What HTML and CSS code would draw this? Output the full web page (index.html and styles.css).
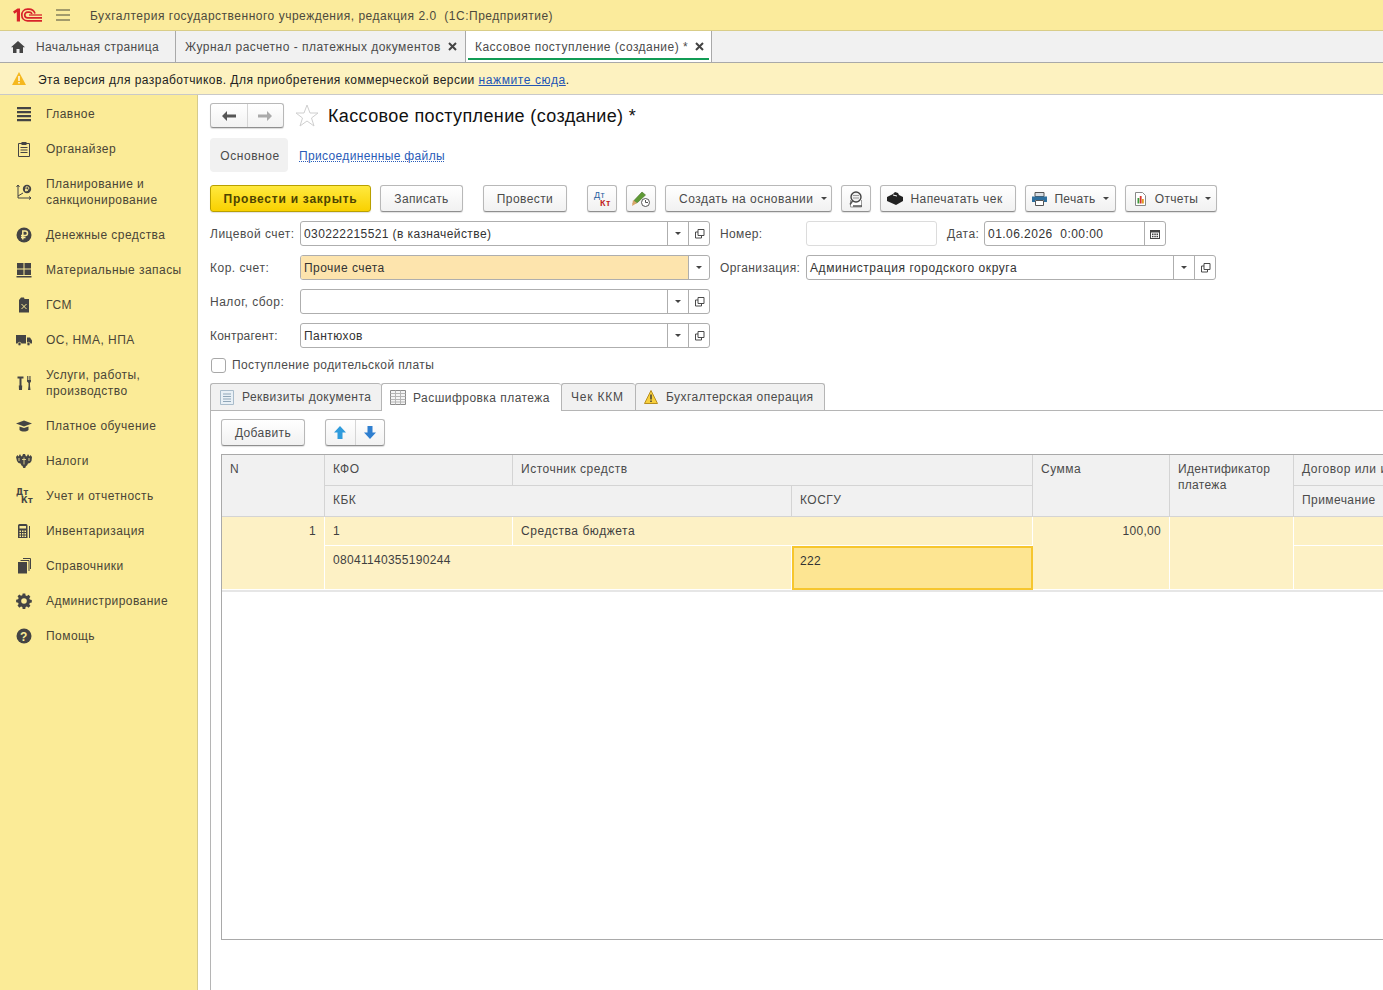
FILE: index.html
```html
<!DOCTYPE html>
<html lang="ru">
<head>
    <meta charset="UTF-8">
    <meta name="viewport" content="width=device-width, initial-scale=1.0">
    <title>Кассовое поступление (создание)</title>
    <link rel="stylesheet" href="styles.css">
</head>
<body>
    <svg class="defs">
        <symbol id="open" viewBox="0 0 11 11"><path d="M4 1.500h6v6H4zM4 4H1.500v6h6V7.500" fill="none" stroke="#4a4a4a"/></symbol>
        <symbol id="cross" viewBox="0 0 9 9"><path d="M1 1l7 7M8 1L1 8" fill="none" stroke="#444" stroke-width="2"/></symbol>
    </svg>

    <header class="titlebar">
        <svg class="logo" width="29" height="14" viewBox="0 0 29 14"><path d="M0 3.500L4.500 .5h2.500v13H3.800V4L1.500 5.800z" fill="#d8232a"/><path d="M29 12.800H14.500C10.800 12.800 8.800 10 8.800 7s2-5.800 5.700-5.800h1.500c3 0 5 1.600 6 4.300M29 9.800H14.700c-1.900 0-3-1.300-3-2.800s1.100-2.800 3-2.800h1.300c1.500 0 2.500.6 3 1.800" fill="none" stroke="#d8232a" stroke-width="1.700"/><path d="M29 7H16" stroke="#d8232a" stroke-width="1.300"/></svg>
        <svg class="burger" width="14" height="12" viewBox="0 0 14 12"><path d="M0 1h14M0 6h14M0 11h14" stroke="#4a4a3a" stroke-width="1"/></svg>
        <span class="app-name">Бухгалтерия государственного учреждения, редакция 2.0&nbsp; (1С:Предприятие)</span>
    </header>

    <nav class="tabbar">
        <div class="tabbar-item home">
            <svg width="14" height="12" viewBox="0 0 14 12"><path d="M7 0l7 6.200h-2V12H8.500V8h-3v4H2V6.200H0z" fill="#444"/></svg>
            <span>Начальная страница</span>
        </div>
        <div class="tabbar-item journal">
            <span>Журнал расчетно - платежных документов</span><svg class="close" width="9" height="9"><use href="#cross"/></svg>
        </div>
        <div class="tabbar-item current">
            <span>Кассовое поступление (создание) *</span><svg class="close" width="9" height="9"><use href="#cross"/></svg>
        </div>
    </nav>

    <div class="notice">
        <svg width="14" height="13" viewBox="0 0 14 13"><path d="M7 0l7 13H0z" fill="#f5b81f"/><path d="M6.300 4h1.400v5H6.300zM6.300 10h1.400v1.500H6.300z" fill="#fff"/></svg>
        <span>Эта версия для разработчиков. Для приобретения коммерческой версии <a href="#">нажмите сюда</a>.</span>
    </div>

    <div class="layout">
        <aside class="sidebar">
            <div class="side-item">
                <svg viewBox="0 0 16 16"><path d="M1 1h14v2.200H1zM1 5h14v2.200H1zM1 9h14v2.200H1zM1 13h14v2.200H1z"/></svg>
                <span>Главное</span>
            </div>
            <div class="side-item">
                <svg viewBox="0 0 16 16"><path d="M2.500 2.500h11v13h-11z" fill="none" stroke="#444"/><path d="M5.500 1h5v3h-5zM4.500 6h7v1h-7zM4.500 8.500h7v1h-7zM4.500 11h7v1h-7z"/></svg>
                <span>Органайзер</span>
            </div>
            <div class="side-item tall">
                <svg viewBox="0 0 16 16"><path d="M2 1v13M0.500 3L2 1l1.500 2M2 14h13M13 12.500l2 1.500-2 1.500M2 12l5-3" fill="none" stroke="#444"/><circle cx="11" cy="5" r="4.200"/><path d="M10 7.500V2.800h1.500a1.300 1.300 0 010 2.700H9M9 6.500h3" fill="none" stroke="#fbeb97" stroke-width=".9"/></svg>
                <span>Планирование и санкционирование</span>
            </div>
            <div class="side-item">
                <svg viewBox="0 0 16 16"><circle cx="8" cy="8" r="7.500"/><path d="M6.800 12.500V4h2.400a2.300 2.300 0 010 4.600H5M5 10.500h4.500" fill="none" stroke="#fbeb97" stroke-width="1.500"/></svg>
                <span>Денежные средства</span>
            </div>
            <div class="side-item">
                <svg viewBox="0 0 16 16"><path d="M1 1h6.500v5.500H1zM8.500 1H15v5.500H8.500zM1 7.500h6.500V13H1zM8.500 7.500H15V13H8.500zM0.500 14h15v1.500H.5z"/></svg>
                <span>Материальные запасы</span>
            </div>
            <div class="side-item">
                <svg viewBox="0 0 16 16"><path d="M3 3l2-2.500h3l.5 1.500L13 2v13.500H3z"/><path d="M5.500 7l5 5M10.500 7l-5 5" stroke="#fbeb97" stroke-width="1"/></svg>
                <span>ГСМ</span>
            </div>
            <div class="side-item">
                <svg viewBox="0 0 16 16"><path d="M0 3h10v8.500H0zM11 5.500h3l2 3v3h-5z"/><circle cx="3.500" cy="12" r="1.700" stroke="#fbeb97" stroke-width=".7"/><circle cx="12.500" cy="12" r="1.700" stroke="#fbeb97" stroke-width=".7"/></svg>
                <span>ОС, НМА, НПА</span>
            </div>
            <div class="side-item tall">
                <svg viewBox="0 0 16 16"><path d="M1.500 1.500h6V3.500H5.500v7h.700l-.2 4.500H3l-.2-4.500h.700v-7h-2zM11 1h.8v4h.9V1h.9v4h.9V1H15v5.500l-1 1.500v3l.5 4h-2.500l.5-4V8l-1.500-1.500z"/></svg>
                <span>Услуги, работы, производство</span>
            </div>
            <div class="side-item">
                <svg viewBox="0 0 16 16"><path d="M0 5.500L8 2.500l8 3-8 3zM3.500 8.500L8 10l4.500-1.500V12c-1 1-3 1.500-4.500 1.500S4.500 13 3.500 12z"/></svg>
                <span>Платное обучение</span>
            </div>
            <div class="side-item">
                <svg viewBox="0 0 16 16"><path d="M0 4l1.500-2 1 1.500L4 1l1 2 1 .5L7 1h2l1 2.500 1-.5 1-2 1.500 2.500 1-1.500L16 4l-.5 4-1.500 2-2 .5-1 2-1 .5-.8 2H7.300l-.8-2-1-.5-1-2-2-.5L1 8z"/><path d="M8 4.500v7M6 6.500h4M3 5v3M13 5v3" stroke="#fbeb97" stroke-width=".8"/></svg>
                <span>Налоги</span>
            </div>
            <div class="side-item">
                <svg viewBox="0 0 16 16"><text x="0" y="7" class="dt-glyph">Дт</text><text x="5" y="15" class="dt-glyph">Кт</text></svg>
                <span>Учет и отчетность</span>
            </div>
            <div class="side-item">
                <svg viewBox="0 0 16 16"><path d="M2 2.500A1.500 1.500 0 013.500 1H10a1.500 1.500 0 011.500 1.500V15H2zM13 3h1v12h-1z"/><path d="M3.500 3h6.500v2.500H3.500zM3.500 7.500h1.500v1.500H3.500zM6 7.500h1.500v1.500H6zM8.500 7.500H10v1.500H8.500zM3.500 10h1.500v1.500H3.500zM6 10h1.500v1.500H6zM8.500 10H10v1.500H8.500zM3.500 12.500h1.500V14H3.500zM6 12.500h1.500V14H6zM8.500 12.500H10V14H8.500z" fill="#fbeb97"/></svg>
                <span>Инвентаризация</span>
            </div>
            <div class="side-item">
                <svg viewBox="0 0 16 16"><path d="M2 4h9v11.500H2z"/><path d="M4.500 2.500h8.500V13M7 .5h7.500V11" fill="none" stroke="#444"/></svg>
                <span>Справочники</span>
            </div>
            <div class="side-item">
                <svg viewBox="0 0 16 16"><path d="M6.500 0h3l.4 2.200 1.500.6 1.900-1.300 2.100 2.100-1.300 1.900.6 1.500 2.300.4v3l-2.300.4-.6 1.500 1.300 1.900-2.100 2.100-1.900-1.300-1.500.6-.4 2.300h-3l-.4-2.300-1.500-.6-1.900 1.300L.6 13.900l1.300-1.900-.6-1.500L-1 10.100v-3l2.300-.4.600-1.500L.6 3.300l2.100-2.100 1.900 1.300 1.500-.6z" transform="translate(1 .5) scale(.87)"/><circle cx="8" cy="8" r="2.800" fill="#fbeb97"/></svg>
                <span>Администрирование</span>
            </div>
            <div class="side-item">
                <svg viewBox="0 0 16 16"><circle cx="8" cy="8" r="7.500"/><text x="8" y="12.500" class="help-glyph">?</text></svg>
                <span>Помощь</span>
            </div>
        </aside>

        <main class="content">
            <div class="doc-head">
                <div class="btn-pair nav-pair">
                    <span class="pair-part">
                        <svg width="14" height="10" viewBox="0 0 14 10"><path d="M0 5l5-5v3.500h9v3H5V10z" fill="#555"/></svg>
                    </span>
                    <span class="pair-part">
                        <svg width="14" height="10" viewBox="0 0 14 10"><path d="M14 5L9 0v3.500H0v3h9V10z" fill="#aaa"/></svg>
                    </span>
                </div>
                <svg class="star" width="24" height="23" viewBox="0 0 24 23"><path d="M12 1l3 8h8l-6.500 5 2.500 8-7-5-7 5 2.500-8L1 9h8z" fill="#fff" stroke="#cfcfcf"/></svg>
                <h1>Кассовое поступление (создание) *</h1>
            </div>

            <div class="doc-sections">
                <span class="section-current">Основное</span>
                <a href="#" class="section-link">Присоединенные файлы</a>
            </div>

            <div class="toolbar">
                <button class="btn btn-primary">Провести и закрыть</button>
                <button class="btn btn-write">Записать</button>
                <button class="btn btn-post">Провести</button>
                <button class="btn btn-icon"><svg width="20" height="18" viewBox="0 0 20 18"><text x="2" y="8" class="dt-blue">Дт</text><text x="8" y="16" class="dt-red">Кт</text></svg></button>
                <button class="btn btn-icon">
                    <svg width="20" height="18" viewBox="0 0 20 18"><path d="M2 14l1.500-4 7.500-8 3.500 3-8 7.500z" fill="#5f9a35" stroke="#3f6f22" stroke-width=".6"/><path d="M1 16l1-6 4 3z" fill="#d9a56a"/><circle cx="14.500" cy="12.500" r="4" fill="#fff" stroke="#555"/><path d="M14.500 10v2.500h2.500" fill="none" stroke="#555"/></svg>
                </button>
                <button class="btn btn-create">Создать на основании<i class="caret"></i></button>
                <button class="btn btn-icon">
                    <svg width="18" height="18" viewBox="0 0 18 18"><path d="M3.500 10v7h11v-7" fill="#fff" stroke="#999"/><circle cx="9" cy="7" r="5" fill="#eee" stroke="#444" stroke-width="1.400"/><path d="M5.500 11L3 14.500M6 16h9" stroke="#555" stroke-width="1.500"/><path d="M6 5.500h6M6 8h6" stroke="#999"/></svg>
                </button>
                <button class="btn btn-receipt">
                    <svg width="16" height="13" viewBox="0 0 16 13"><path d="M0 5l6-3 2-2 3 1 1 2 4 2v4l-7 4-9-4z" fill="#222"/><path d="M6 3l4 1" stroke="#fff"/></svg>
                    <span>Напечатать чек</span>
                </button>
                <button class="btn btn-print">
                    <svg width="15" height="14" viewBox="0 0 15 14"><path d="M3 .5h9v4H3z" fill="#d7dde3" stroke="#555"/><path d="M0 4.500h15V10h-3V8H3v2H0z" fill="#2e6f9e"/><path d="M3.500 8.500h8V13.500h-8z" fill="#fff" stroke="#555"/></svg>
                    <span>Печать</span><i class="caret"></i>
                </button>
                <button class="btn btn-reports">
                    <svg width="11" height="14" viewBox="0 0 11 14"><path d="M.5.500h7l3 3v10H.5z" fill="#fff" stroke="#888"/><path d="M2.500 6h1.800v5.500H2.500z" fill="#3a9a3a"/><path d="M4.800 4h1.800v7.500H4.800z" fill="#d8342a"/><path d="M7 7h1.800v4.500H7z" fill="#e0a020"/></svg>
                    <span>Отчеты</span><i class="caret"></i>
                </button>
            </div>

            <div class="form">
                <div class="form-row">
                    <label class="lbl">Лицевой счет:</label>
                    <div class="field wide">
                        <span class="val val-tight">030222215521 (в казначействе)</span>
                        <span class="fbtn"><i class="caret"></i></span>
                        <span class="fbtn"><svg width="11" height="11"><use href="#open"/></svg></span>
                    </div>
                    <label class="lbl lbl-mid">Номер:</label>
                    <div class="field number"></div>
                    <label class="lbl lbl-date">Дата:</label>
                    <div class="field date">
                        <span class="val">01.06.2026&nbsp; 0:00:00</span>
                        <span class="fbtn">
                            <svg width="10" height="10" viewBox="0 0 10 10"><path d="M0 1h10v9H0z" fill="#444"/><path d="M1 3.500h8V9H1z" fill="#fff"/><path d="M2 4.500h1.500V6H2zM4.300 4.500h1.500V6H4.300zM6.500 4.500H8V6H6.500zM2 6.800h1.500v1.500H2zM4.300 6.800h1.500v1.500H4.300zM6.500 6.800H8v1.500H6.500z" fill="#444"/></svg>
                        </span>
                    </div>
                </div>
                <div class="form-row">
                    <label class="lbl">Кор. счет:</label>
                    <div class="field wide required">
                        <span class="val">Прочие счета</span>
                        <span class="fbtn"><i class="caret"></i></span>
                    </div>
                    <label class="lbl lbl-mid">Организация:</label>
                    <div class="field org">
                        <span class="val val-wide">Администрация городского округа</span>
                        <span class="fbtn"><i class="caret"></i></span>
                        <span class="fbtn"><svg width="11" height="11"><use href="#open"/></svg></span>
                    </div>
                </div>
                <div class="form-row">
                    <label class="lbl">Налог, сбор:</label>
                    <div class="field wide">
                        <span class="val"></span>
                        <span class="fbtn"><i class="caret"></i></span>
                        <span class="fbtn"><svg width="11" height="11"><use href="#open"/></svg></span>
                    </div>
                </div>
                <div class="form-row">
                    <label class="lbl lbl-tight">Контрагент:</label>
                    <div class="field wide">
                        <span class="val">Пантюхов</span>
                        <span class="fbtn"><i class="caret"></i></span>
                        <span class="fbtn"><svg width="11" height="11"><use href="#open"/></svg></span>
                    </div>
                </div>
            </div>

            <div class="check-row">
                <span class="checkbox"></span>
                <span>Поступление родительской платы</span>
            </div>

            <div class="page-tabs">
                <div class="page-tab tab-req">
                    <svg width="14" height="15" viewBox="0 0 14 15"><path d="M.5.500h13v14H.5z" fill="#e8f0f6" stroke="#a9bccb"/><path d="M3 4h8M3 6.500h8M3 9h8M3 11.500h8" stroke="#8fa6b8"/></svg>
                    <span>Реквизиты документа</span>
                </div>
                <div class="page-tab active tab-pay">
                    <svg width="16" height="15" viewBox="0 0 16 15"><path d="M.5.500h15v14H.5z" fill="#f4f4f4" stroke="#8a8a8a"/><path d="M.5 3.500h15M5.500.5v14M10.500.5v14M.5 6.500h15M.5 9.500h15M.5 12h15" stroke="#b5b5b5"/></svg>
                    <span>Расшифровка платежа</span>
                </div>
                <div class="page-tab tab-kkm"><span>Чек ККМ</span></div>
                <div class="page-tab tab-op">
                    <svg width="14" height="14" viewBox="0 0 14 14"><path d="M7 .5L13.500 13.500H.5z" fill="#f7cf3c" stroke="#b88f1e"/><path d="M6.300 4.500h1.400v5H6.300zM6.300 10.500h1.400V12H6.300z" fill="#333"/></svg>
                    <span>Бухгалтерская операция</span>
                </div>
            </div>

            <section class="tab-panel">
                <div class="panel-tools">
                    <button class="btn btn-add">Добавить</button>
                    <div class="btn-pair move-pair">
                        <span class="pair-part">
                            <svg width="12" height="13" viewBox="0 0 12 13"><path d="M6 0l6 6.500H8.500V13h-5V6.500H0z" fill="#2f9bdc"/></svg>
                        </span>
                        <span class="pair-part">
                            <svg width="12" height="13" viewBox="0 0 12 13"><path d="M6 13L0 6.500h3.500V0h5v6.500H12z" fill="#2f7fd0"/></svg>
                        </span>
                    </div>
                </div>

                <div class="grid-box">
                    <div class="grid-table">
                        <div class="th c-n">N</div>
                        <div class="th c-kfo">КФО</div>
                        <div class="th c-src">Источник средств</div>
                        <div class="th c-sum">Сумма</div>
                        <div class="th c-id">Идентификатор платежа</div>
                        <div class="th c-dog">Договор или источник</div>
                        <div class="th c-kbk">КБК</div>
                        <div class="th c-kosgu">КОСГУ</div>
                        <div class="th c-note">Примечание</div>

                        <div class="td r-n num">1</div>
                        <div class="td r-kfo">1</div>
                        <div class="td r-src">Средства бюджета</div>
                        <div class="td r-sum num">100,00</div>
                        <div class="td r-id"></div>
                        <div class="td r-dog"></div>
                        <div class="td r-kbk">08041140355190244</div>
                        <div class="td r-kosgu">222</div>
                        <div class="td r-note"></div>
                    </div>
                </div>
            </section>
        </main>
    </div>
</body>
</html>
```

FILE: styles.css
```css
* {
    box-sizing: border-box;
}
html, body {
    height: 100%;
}
body {
    margin: 0;
    height: 990px;
    overflow: hidden;
    font-family: "Liberation Sans", Arial, sans-serif;
    font-size: 12px;
    color: #4b4b4b;
    background: #fff;
}
.defs {
    display: none;
}
a {
    color: #2255b5;
}
.titlebar {
    height: 31px;
    display: flex;
    align-items: center;
    padding-left: 13px;
    background: #fbeb9c;
    border-bottom: 1px solid #d9cd88;
}
.logo {
    margin-right: 14px;
}
.burger {
    margin-right: 20px;
}
.app-name {
    margin-top: 2px;
    color: #4d4a3c;
    letter-spacing: .51px;
}
.tabbar {
    height: 32px;
    display: flex;
    background: #f1f1f1;
    border-bottom: 1px solid #a9a9a9;
}
.tabbar-item {
    display: flex;
    align-items: center;
    border-right: 1px solid #a9a9a9;
    letter-spacing: .48px;
}
.tabbar-item.home {
    width: 176px;
    padding-left: 11px;
    gap: 11px;
    letter-spacing: .38px;
}
.tabbar-item.journal {
    width: 290px;
    padding-left: 9px;
}
.tabbar-item.current {
    width: 246px;
    padding-left: 9px;
    background: #fff;
    position: relative;
}
.tabbar-item.current::after {
    content: "";
    position: absolute;
    left: 2px;
    right: 2px;
    bottom: 2px;
    height: 2px;
    background: #119c55;
}
.close {
    margin-left: 7px;
    flex: none;
}
.notice {
    height: 32px;
    display: flex;
    align-items: center;
    gap: 12px;
    padding-left: 12px;
    background: #fdf2c0;
    border-bottom: 1px solid #c9c9c9;
    color: #222;
    letter-spacing: .45px;
}
.notice span {
    margin-top: 2px;
}
.notice a {
    letter-spacing: .6px;
}
.layout {
    display: flex;
    height: 895px;
}
.sidebar {
    width: 198px;
    flex: none;
    padding-top: 1px;
    background: #fbeb97;
    border-right: 1px solid #d6cb8b;
}
.side-item {
    height: 35px;
    display: flex;
    align-items: center;
    gap: 14px;
    padding-left: 16px;
    color: #4a4536;
    line-height: 16px;
    letter-spacing: .45px;
}
.side-item.tall {
    height: 51px;
}
.side-item svg {
    width: 16px;
    height: 16px;
    flex: none;
    fill: #444;
    overflow: visible;
}
.dt-glyph {
    font-size: 8px;
    font-weight: bold;
    font-family: "DejaVu Sans", sans-serif;
}
.help-glyph {
    font-size: 12px;
    font-weight: bold;
    text-anchor: middle;
    fill: #fbeb97;
}
.content {
    flex: 1;
    min-width: 0;
    display: flex;
    flex-direction: column;
    padding: 8px 0 0 12px;
}
.doc-head {
    height: 25px;
    display: flex;
    align-items: center;
}
.btn-pair {
    display: flex;
    background: linear-gradient(#fff, #f2f2f2);
    border: 1px solid #b8b8b8;
    border-bottom-color: #8f8f8f;
    border-radius: 3px;
    box-shadow: 0 1px 1px rgba(0,0,0,0.15);
}
.pair-part {
    display: flex;
    align-items: center;
    justify-content: center;
    flex: 1;
}
.pair-part + .pair-part {
    border-left: 1px solid #d5d5d5;
}
.nav-pair {
    width: 74px;
    height: 25px;
}
.star {
    margin-left: 11px;
    margin-right: 9px;
}
h1 {
    margin: 2px 0 0;
    font-size: 18px;
    font-weight: normal;
    color: #111;
    letter-spacing: .37px;
}
.doc-sections {
    height: 34px;
    margin-top: 10px;
    display: flex;
    align-items: center;
}
.section-current {
    width: 78px;
    height: 34px;
    padding: 2px 0 0 2px;
    display: flex;
    align-items: center;
    justify-content: center;
    background: #f1f1f1;
    border-radius: 4px;
    letter-spacing: .55px;
}
.section-link {
    margin: 2px 0 0 11px;
    color: #2a5cb8;
    text-decoration: underline dotted;
    letter-spacing: .35px;
}
.toolbar {
    display: flex;
    margin-top: 13px;
    height: 27px;
}
.btn {
    height: 27px;
    display: flex;
    align-items: center;
    justify-content: center;
    gap: 7px;
    padding: 0;
    margin-right: 9px;
    font-family: inherit;
    font-size: 12px;
    color: #4b4b4b;
    letter-spacing: .4px;
    background: linear-gradient(#fff, #f1f1f1);
    border: 1px solid #b8b8b8;
    border-bottom-color: #8f8f8f;
    border-radius: 3px;
    box-shadow: 0 1px 1px rgba(0,0,0,0.12);
}
.btn-primary {
    width: 161px;
    font-weight: bold;
    color: #4d4300;
    letter-spacing: .75px;
    background: linear-gradient(#ffe93f, #f9d100);
    border-color: #b9a000;
}
.btn-write {
    width: 83px;
    margin-right: 20px;
}
.btn-post {
    width: 84px;
    margin-right: 20px;
}
.btn-icon {
    width: 30px;
}
.btn-create {
    width: 167px;
    justify-content: flex-start;
    padding-left: 13px;
    letter-spacing: .5px;
}
.btn-receipt {
    width: 136px;
    padding-right: 6px;
    letter-spacing: .46px;
}
.btn-print {
    width: 91px;
    letter-spacing: .3px;
}
.btn-reports {
    width: 92px;
    margin-right: 0;
    padding-left: 4px;
    gap: 9px;
    letter-spacing: .3px;
}
.btn-reports .caret {
    margin-left: -2px;
}
.caret {
    display: inline-block;
    width: 0;
    height: 0;
    border-left: 3px solid transparent;
    border-right: 3px solid transparent;
    border-top: 3px solid #444;
}
.dt-blue {
    font-size: 9px;
    fill: #27609f;
}
.dt-red {
    font-size: 9px;
    font-weight: bold;
    fill: #c21f1f;
}
.form {
    margin-top: 9px;
}
.form-row {
    display: flex;
    align-items: center;
    height: 25px;
    margin-bottom: 9px;
}
.lbl {
    width: 90px;
    flex: none;
    letter-spacing: .5px;
    white-space: nowrap;
}
.lbl-tight {
    letter-spacing: .22px;
}
.lbl-mid {
    width: 86px;
    margin-left: 10px;
    letter-spacing: .38px;
}
.lbl-date {
    width: 37px;
    margin-left: 10px;
}
.field {
    height: 25px;
    display: flex;
    flex: none;
    background: #fff;
    border: 1px solid #aeaeae;
    border-radius: 3px;
    color: #333;
    letter-spacing: .46px;
    overflow: hidden;
}
.wide {
    width: 410px;
}
.number {
    width: 131px;
    border-color: #dcdcdc;
}
.date {
    width: 182px;
}
.org {
    width: 410px;
}
.val {
    flex: 1;
    padding-left: 3px;
    line-height: 25px;
    white-space: nowrap;
}
.val-tight {
    letter-spacing: .4px;
}
.val-wide {
    letter-spacing: .56px;
}
.required .val {
    background: #fde4ad;
}
.fbtn {
    width: 21px;
    flex: none;
    display: flex;
    align-items: center;
    justify-content: center;
    border-left: 1px solid #aeaeae;
}
.check-row {
    display: flex;
    align-items: center;
    gap: 6px;
    height: 16px;
    margin-top: 0;
    padding-left: 1px;
    letter-spacing: .4px;
}
.checkbox {
    width: 15px;
    height: 15px;
    border: 1px solid #a8a8a8;
    border-radius: 3px;
}
.page-tabs {
    display: flex;
    margin-top: 10px;
    height: 28px;
    position: relative;
    z-index: 1;
    flex: none;
}
.page-tab {
    height: 27px;
    display: flex;
    align-items: center;
    gap: 8px;
    padding-left: 9px;
    background: #f1f1f1;
    border: 1px solid #b5b5b5;
    border-right: 0;
    border-bottom: 0;
    border-radius: 3px 3px 0 0;
    letter-spacing: .46px;
}
.page-tab.active {
    height: 28px;
    background: #fff;
    padding-left: 8px;
    gap: 7px;
}
.tab-req {
    width: 171px;
}
.tab-pay {
    width: 180px;
}
.tab-kkm {
    width: 74px;
    letter-spacing: .8px;
}
.tab-op {
    width: 190px;
    padding-left: 8px;
    border-right: 1px solid #b5b5b5;
}
.tab-panel {
    flex: 1;
    margin-top: -1px;
    padding: 8px 0 0 10px;
    border-top: 1px solid #b5b5b5;
    border-left: 1px solid #b5b5b5;
}
.panel-tools {
    display: flex;
    height: 27px;
}
.btn-add {
    width: 84px;
    margin-right: 20px;
}
.move-pair {
    width: 60px;
    height: 27px;
}
.grid-box {
    margin-top: 8px;
    width: 1200px;
    height: 486px;
    border: 1px solid #a9a9a9;
    border-right: 0;
    overflow: hidden;
}
.grid-table {
    display: grid;
    grid-template-columns: 103px 188px 279px 241px 137px 124px 130px;
    grid-template-rows: 31px 31px 29px 44px;
    border-bottom: 2px solid #e6e6e6;
    width: max-content;
}
.th {
    padding: 6px 8px 0;
    line-height: 16px;
    background: #f1f1f1;
    border-right: 1px solid #d4d4d4;
    border-bottom: 1px solid #d4d4d4;
    letter-spacing: .5px;
    white-space: nowrap;
    overflow: hidden;
}
.td {
    padding: 6px 8px 0;
    line-height: 16px;
    color: #3f3f3f;
    background: #fdf1c5;
    border-right: 1px solid #fff;
    border-bottom: 1px solid #fff;
    letter-spacing: .3px;
}
.num {
    text-align: right;
}
.c-n { grid-area: 1 / 1 / 3 / 2; }
.c-kfo { grid-area: 1 / 2; }
.c-src { grid-area: 1 / 3 / 2 / 5; }
.c-sum { grid-area: 1 / 5 / 3 / 6; }
.c-id { grid-area: 1 / 6 / 3 / 7; white-space: normal; letter-spacing: .3px; }
.c-dog { grid-area: 1 / 7; }
.c-kbk { grid-area: 2 / 2 / 3 / 4; }
.c-kosgu { grid-area: 2 / 4; }
.c-note { grid-area: 2 / 7; letter-spacing: .42px; }
.r-n { grid-area: 3 / 1 / 5 / 2; }
.r-kfo { grid-area: 3 / 2; }
.r-src { grid-area: 3 / 3 / 4 / 5; letter-spacing: .55px; }
.r-sum { grid-area: 3 / 5 / 5 / 6; }
.r-id { grid-area: 3 / 6 / 5 / 7; }
.r-dog { grid-area: 3 / 7; }
.r-kbk { grid-area: 4 / 2 / 5 / 4; }
.r-kosgu {
    grid-area: 4 / 4;
    background: #fde592;
    border: 2px solid #f6c62e;
    color: #333;
    padding: 5px 6px 0;
}
.r-note { grid-area: 4 / 7; }
```
